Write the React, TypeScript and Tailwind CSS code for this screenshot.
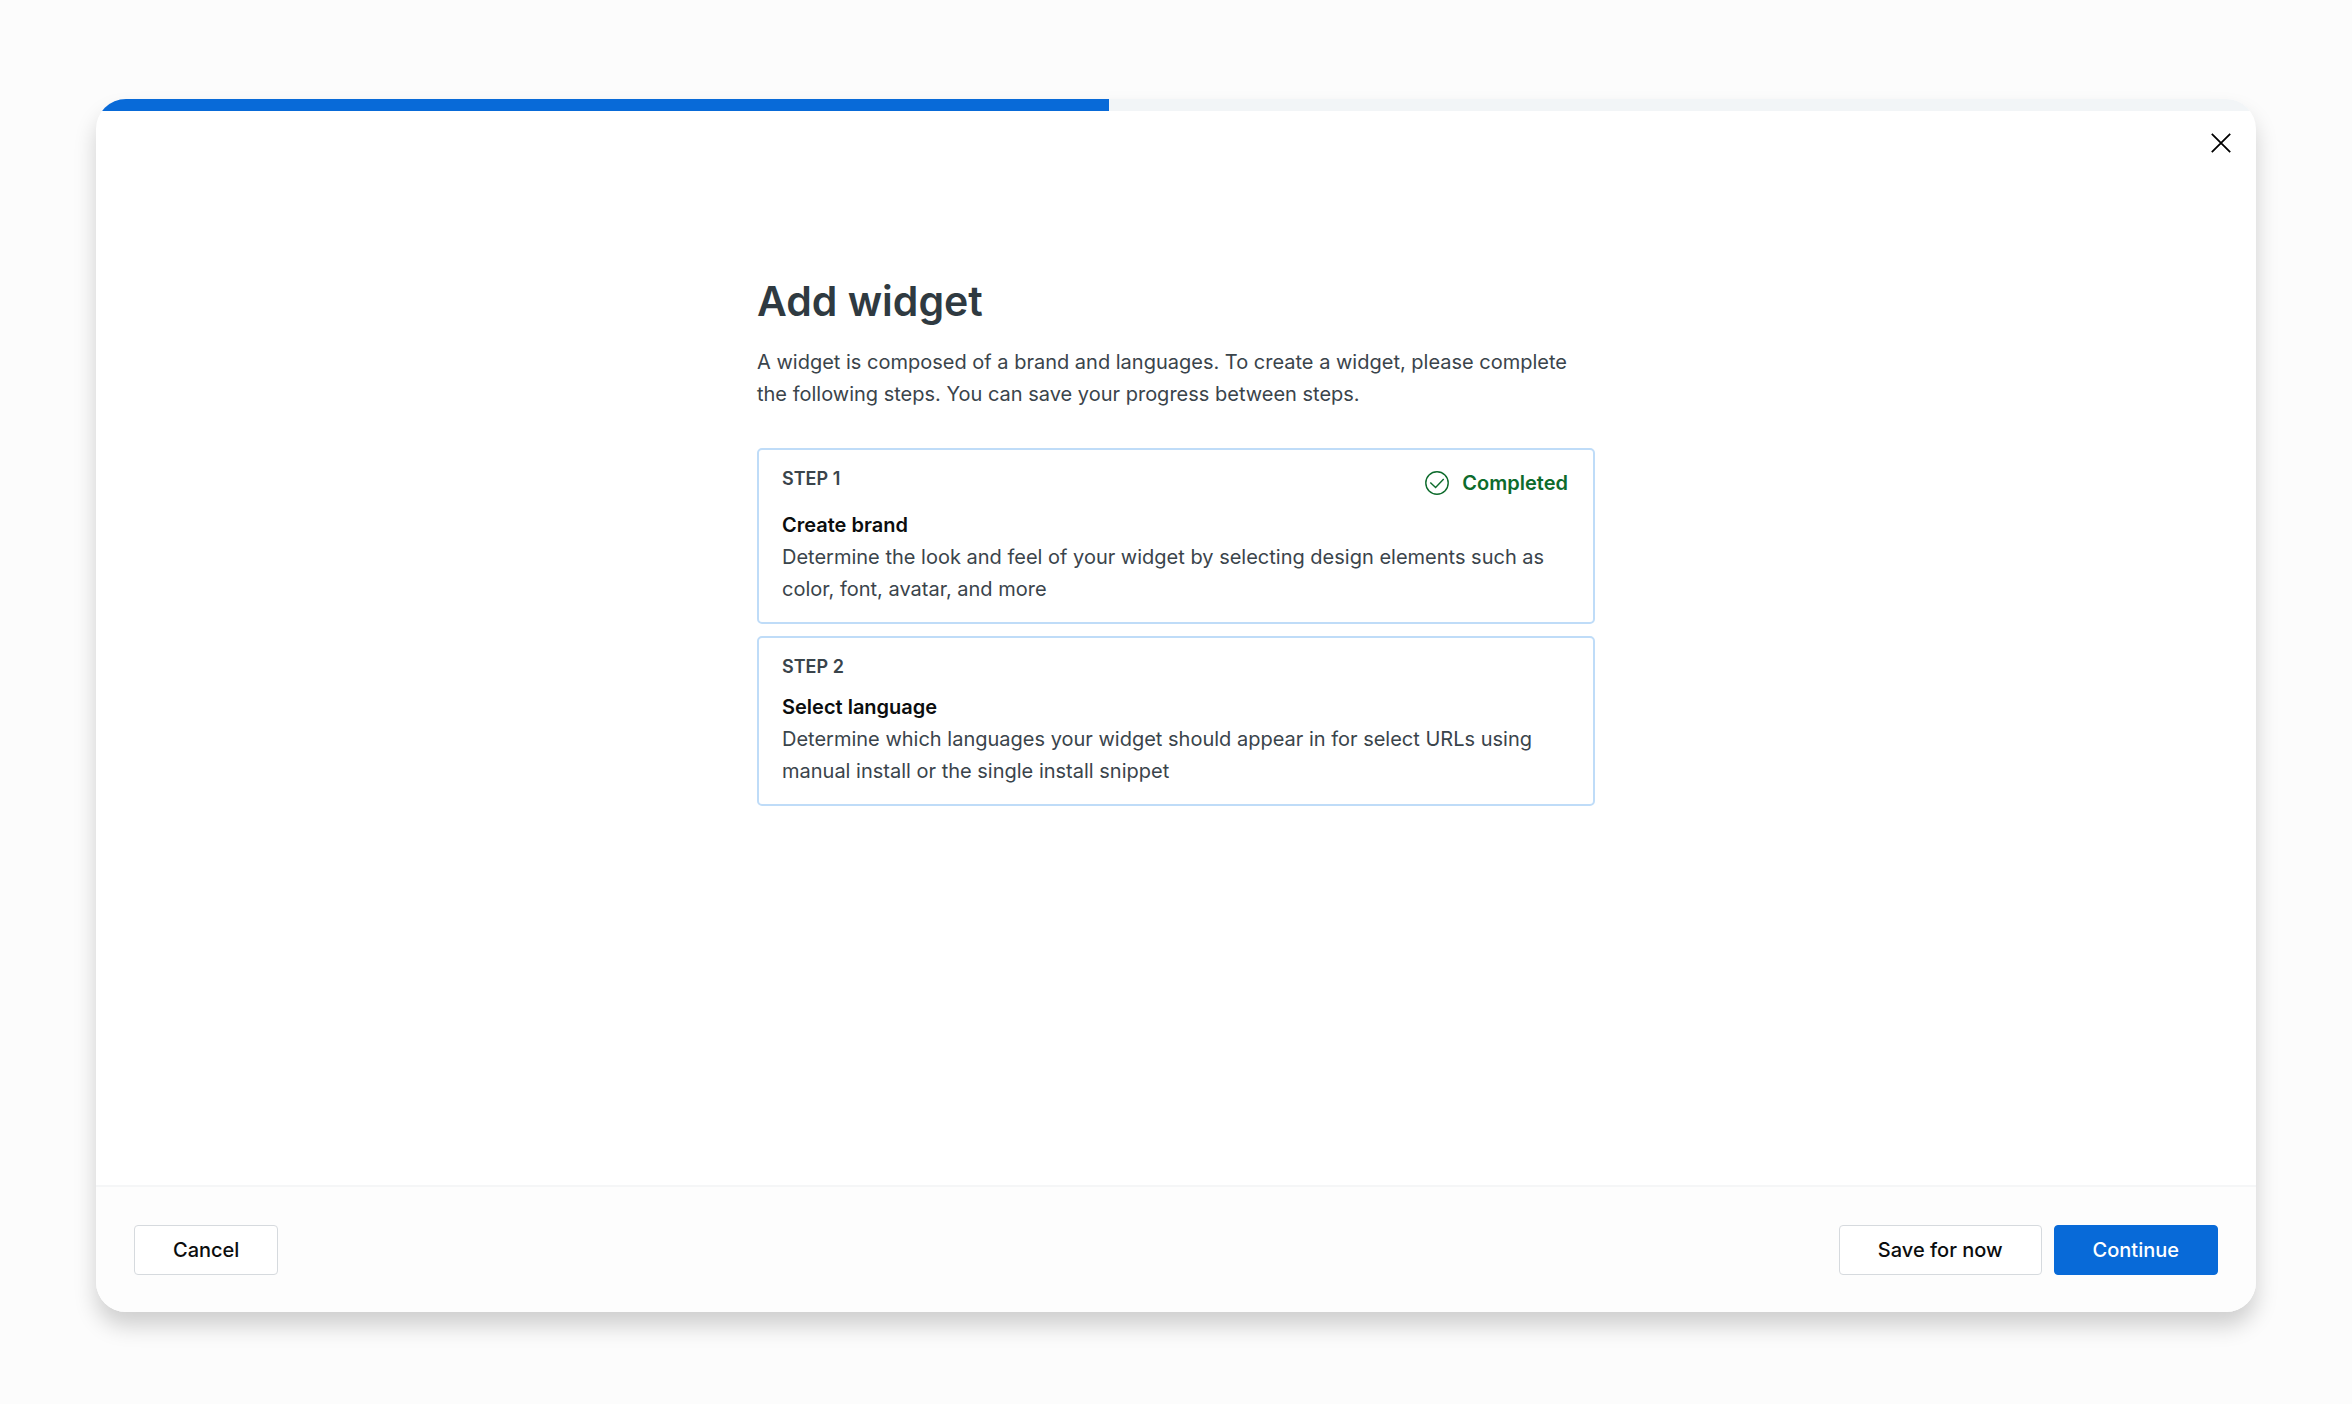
import { clsx } from "clsx";

const steps = [
  {
    label: "STEP 1",
    title: "Create brand",
    body: "Determine the look and feel of your widget by selecting design elements such as color, font, avatar, and more",
    completed: true,
  },
  {
    label: "STEP 2",
    title: "Select language",
    body: "Determine which languages your widget should appear in for select URLs using manual install or the single install snippet",
    completed: false,
  },
];

export default function App() {
  return (
    <div className="flex min-h-screen flex-col bg-[#fcfcfc] px-24 pb-[92px] pt-[99px] font-['Inter',sans-serif] text-[#3a444b]">
      <section
        aria-labelledby="dialog-title"
        className="flex flex-1 flex-col overflow-hidden rounded-[30px] bg-white shadow-[0_14px_22px_rgba(0,0,0,0.18)]"
        role="dialog"
      >
        <ProgressBar value={46.9} />

        <div className="flex justify-end px-[13px] pt-[10px]">
          <button aria-label="Close" className="flex size-11 items-center justify-center text-black" type="button">
            <CloseIcon />
          </button>
        </div>

        <main className="mx-auto w-full max-w-[838px] flex-1 pt-28">
          <h1 className="text-[41px] font-semibold leading-[48px] text-[#2f3a41]" id="dialog-title">
            Add widget
          </h1>
          <p className="mt-[21px] text-xl leading-8">
            A widget is composed of a brand and languages. To create a widget, please complete the
            following steps. You can save your progress between steps.
          </p>

          <ol className="mt-[38px] grid gap-3">
            {steps.map((step) => (
              <StepCard key={step.label} {...step} />
            ))}
          </ol>
        </main>

        <footer className="flex items-center justify-between border-t-2 border-[#f5f6f7] bg-[#fdfdfd] px-[38px] pb-[37px] pt-[38px]">
          <Button>Cancel</Button>
          <div className="flex gap-3">
            <Button>Save for now</Button>
            <Button variant="primary">Continue</Button>
          </div>
        </footer>
      </section>
    </div>
  );
}

type ProgressBarProps = {
  value: number;
};

function ProgressBar({ value }: ProgressBarProps) {
  return (
    <div
      aria-label="Setup progress"
      aria-valuemax={100}
      aria-valuemin={0}
      aria-valuenow={value}
      className="h-3 bg-[#f2f5f7]"
      role="progressbar"
    >
      <div className="h-full bg-[#086ad8]" style={{ width: `${value}%` }} />
    </div>
  );
}

type StepCardProps = {
  label: string;
  title: string;
  body: string;
  completed: boolean;
};

function StepCard({ label, title, body, completed }: StepCardProps) {
  return (
    <li className="rounded-[5px] border-2 border-[#bfdcf8] py-[17px] pl-[23px] pr-[25px]">
      <div className="flex min-h-[26px] items-start justify-between">
        <span className="text-lg font-semibold leading-6">{label}</span>
        {completed && (
          <span className="flex items-center gap-[13px] text-xl font-semibold leading-8 text-[#0d6b2c]">
            <CheckIcon />
            Completed
          </span>
        )}
      </div>
      <h2 className="mt-[10px] text-xl font-semibold leading-8 text-[#0b0d0e]">{title}</h2>
      <p className="text-xl leading-8">{body}</p>
    </li>
  );
}

type ButtonProps = {
  children: string;
  variant?: "outline" | "primary";
};

function Button({ children, variant = "outline" }: ButtonProps) {
  return (
    <button
      className={clsx(
        "h-[50px] rounded-[4px] border px-[38px] text-xl font-medium",
        variant === "primary"
          ? "border-[#086ad8] bg-[#086ad8] text-white"
          : "border-[#d6dade] bg-white text-[#0b0d0e]",
      )}
      type="button"
    >
      {children}
    </button>
  );
}

function CloseIcon() {
  return (
    <svg aria-hidden="true" fill="none" height="20" stroke="currentColor" strokeWidth="1.8" viewBox="0 0 20 20" width="20">
      <path d="M0.8 0.8 19.2 19.2M19.2 0.8 0.8 19.2" />
    </svg>
  );
}

function CheckIcon() {
  return (
    <svg aria-hidden="true" fill="none" height="24" stroke="currentColor" strokeWidth="1.4" viewBox="0 0 24 24" width="24">
      <circle cx="12" cy="12" r="11.2" />
      <path d="m5.3 11.4 5.3 5.1 8.1-8.4" />
    </svg>
  );
}
